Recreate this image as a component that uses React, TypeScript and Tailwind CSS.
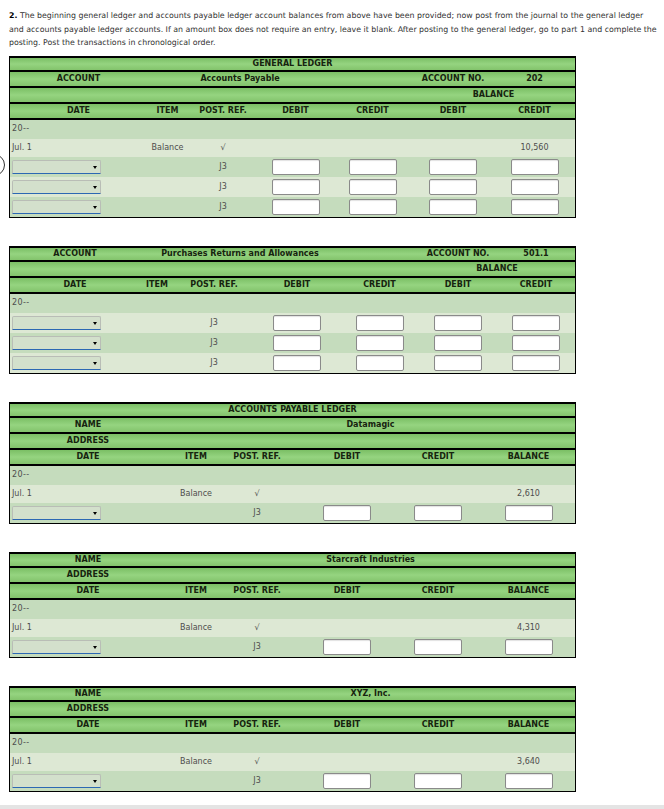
const HEAD =
  "bg-[linear-gradient(to_bottom,#7bbf65,#95d480_50%,#83c36c)] border-b-2 border-black h-[16px] items-center font-bold text-[#17240f]";
const DARK = "bg-[#c5dcbd]";
const LIGHT = "bg-[#dde8d4]";

const T1 = "grid grid-cols-[137px_41px_70px_75px_79px_82px_81px]";
const T2 = "grid grid-cols-[130px_34px_80px_86px_79px_78px_78px]";
const TA = "grid grid-cols-[156px_60px_74px_94px_88px_93px]";

function DateSelect() {
  return (
    <div className="relative ml-[2px] h-[14px] w-[89px] rounded-t-[2px] border border-[#b9bdb6] border-b-[#2c68b3] bg-[#d3e0cc]">
      <span className="absolute right-[3px] top-[5px] h-0 w-0 border-x-[2px] border-t-[3px] border-x-transparent border-t-black" />
    </div>
  );
}

function Box() {
  return (
    <div className="h-[16px] w-[48px] rounded-[2px] border border-[#8a8a8a] bg-white shadow-[inset_0_1px_1px_rgba(0,0,0,0.12)]" />
  );
}

function Cell({ children, className = "" }: { children?: React.ReactNode; className?: string }) {
  return <div className={`flex items-center justify-center ${className}`}>{children}</div>;
}

function Table({ children }: { children: React.ReactNode }) {
  // first header row is 2px shorter, the table's top border takes that room
  return (
    <div className="w-[567px] border-x border-b border-t-2 border-black [&>div:first-child]:h-[14px]">
      {children}
    </div>
  );
}

function YearRow() {
  return (
    <div className={`flex h-[19px] items-center pl-[2px] tracking-[0.4px] ${DARK}`}>20--</div>
  );
}

function GLTable({
  grid,
  title,
  name,
  number,
  jul,
  rows,
}: {
  grid: string;
  title?: string;
  name: string;
  number: string;
  jul?: string;
  rows: number;
}) {
  const bodyStart = jul ? 2 : 1;
  return (
    <Table>
      {title && <div className={`flex justify-center ${HEAD}`}>{title}</div>}
      <div className={`${grid} ${HEAD}`}>
        <Cell>ACCOUNT</Cell>
        <Cell className="col-span-3">{name}</Cell>
        <Cell />
        <Cell>ACCOUNT NO.</Cell>
        <Cell>{number}</Cell>
      </div>
      <div className={`${grid} ${HEAD}`}>
        <div className="col-span-5" />
        <Cell className="col-span-2">BALANCE</Cell>
      </div>
      <div className={`${grid} ${HEAD}`}>
        <Cell>DATE</Cell>
        <Cell>ITEM</Cell>
        <Cell>POST. REF.</Cell>
        <Cell>DEBIT</Cell>
        <Cell>CREDIT</Cell>
        <Cell>DEBIT</Cell>
        <Cell>CREDIT</Cell>
      </div>
      <YearRow />
      {jul && (
        <div className={`${grid} h-[18px] items-center ${LIGHT}`}>
          <div className="pl-[2px]">Jul. 1</div>
          <Cell>Balance</Cell>
          <Cell>√</Cell>
          <Cell />
          <Cell />
          <Cell />
          <Cell>{jul}</Cell>
        </div>
      )}
      {Array.from({ length: rows }).map((_, i) => (
        <div
          key={i}
          className={`${grid} h-[20px] items-center ${(i + bodyStart) % 2 === 0 ? DARK : LIGHT}`}
        >
          <div className="flex items-center">
            <DateSelect />
          </div>
          <Cell />
          <Cell>J3</Cell>
          <Cell><Box /></Cell>
          <Cell><Box /></Cell>
          <Cell><Box /></Cell>
          <Cell><Box /></Cell>
        </div>
      ))}
    </Table>
  );
}

function APTable({ title, name, balance }: { title?: string; name: string; balance: string }) {
  return (
    <Table>
      {title && <div className={`flex justify-center ${HEAD}`}>{title}</div>}
      <div className={`${TA} ${HEAD}`}>
        <Cell>NAME</Cell>
        <Cell className="col-span-5">{name}</Cell>
      </div>
      <div className={`${TA} ${HEAD}`}>
        <Cell>ADDRESS</Cell>
      </div>
      <div className={`${TA} ${HEAD}`}>
        <Cell>DATE</Cell>
        <Cell>ITEM</Cell>
        <Cell className="pr-[12px]">POST. REF.</Cell>
        <Cell>DEBIT</Cell>
        <Cell>CREDIT</Cell>
        <Cell>BALANCE</Cell>
      </div>
      <YearRow />
      <div className={`${TA} h-[18px] items-center ${LIGHT}`}>
        <div className="pl-[2px]">Jul. 1</div>
        <Cell>Balance</Cell>
        <Cell className="pr-[12px]">√</Cell>
        <Cell />
        <Cell />
        <Cell>{balance}</Cell>
      </div>
      <div className={`${TA} h-[20px] items-center ${DARK}`}>
        <div className="flex items-center">
          <DateSelect />
        </div>
        <Cell />
        <Cell className="pr-[12px]">J3</Cell>
        <Cell><Box /></Cell>
        <Cell><Box /></Cell>
        <Cell><Box /></Cell>
      </div>
    </Table>
  );
}

export default function App() {
  return (
    <div className="relative min-h-[809px] bg-white font-['DejaVu_Sans',Verdana,sans-serif] text-[8px] text-[#4d4d4d]">
      <div className="pl-[9px] pr-[4px] pt-[9px]">
        <p className="text-[7.85px] leading-[13.5px] text-[#333]">
          <b className="text-black">2.</b> The beginning general ledger and accounts payable ledger account
          balances from above have been provided; now post from the journal to the general ledger and
          accounts payable ledger accounts. If an amount box does not require an entry, leave it blank.
          After posting to the general ledger, go to part 1 and complete the posting. Post the
          transactions in chronological order.
        </p>

        <div className="mt-[6px] flex flex-col gap-[28px]">
          <GLTable
            grid={T1}
            title="GENERAL LEDGER"
            name="Accounts Payable"
            number="202"
            jul="10,560"
            rows={3}
          />
          <GLTable grid={T2} name="Purchases Returns and Allowances" number="501.1" rows={3} />
          <APTable title="ACCOUNTS PAYABLE LEDGER" name="Datamagic" balance="2,610" />
          <APTable name="Starcraft Industries" balance="4,310" />
          <APTable name="XYZ, Inc." balance="3,640" />
        </div>
      </div>

      {/* partial focus ring peeking in at the left edge */}
      <div className="absolute left-[-17px] top-[154px] h-[22px] w-[22px] rounded-full border border-[#333]" />

      <div className="absolute bottom-0 left-0 h-[4px] w-full bg-[#e4e4e4]" />
    </div>
  );
}
